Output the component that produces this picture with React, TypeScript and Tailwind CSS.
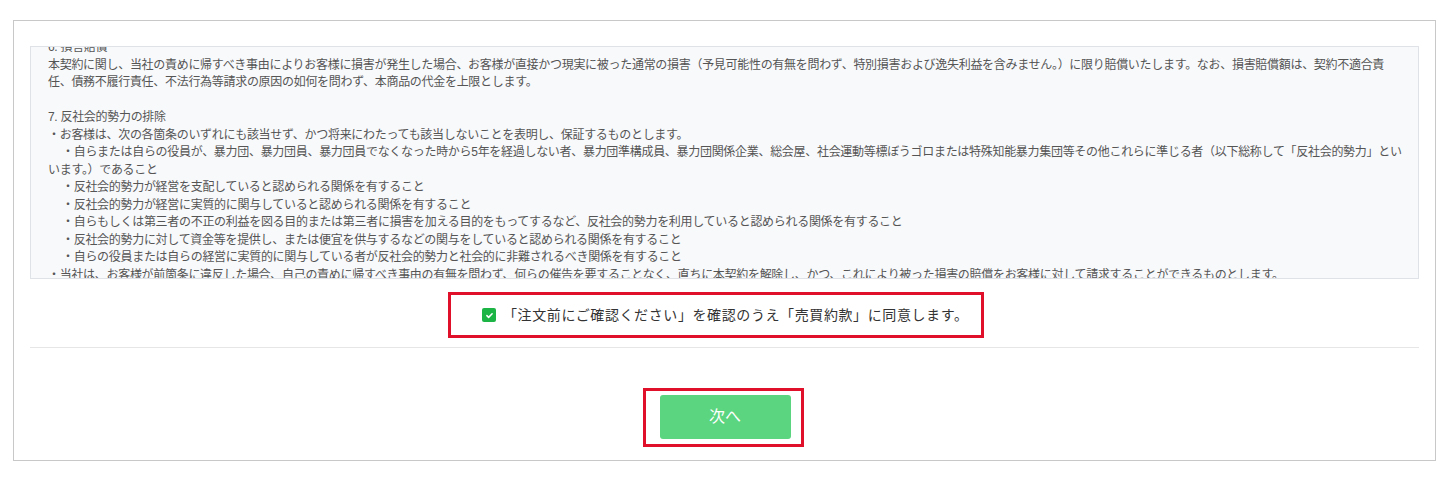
import { useState } from 'react';

const SUB_ITEMS = [
  '反社会的勢力が経営を支配していると認められる関係を有すること',
  '反社会的勢力が経営に実質的に関与していると認められる関係を有すること',
  '自らもしくは第三者の不正の利益を図る目的または第三者に損害を加える目的をもってするなど、反社会的勢力を利用していると認められる関係を有すること',
  '反社会的勢力に対して資金等を提供し、または便宜を供与するなどの関与をしていると認められる関係を有すること',
  '自らの役員または自らの経営に実質的に関与している者が反社会的勢力と社会的に非難されるべき関係を有すること',
];

function SubItem({ children }: { children: React.ReactNode }) {
  return (
    <div className="whitespace-nowrap">
      <span className="inline-block w-[14px]" />・{children}
    </div>
  );
}

export default function App() {
  const [agreed, setAgreed] = useState(true);

  return (
    <div className="min-h-screen bg-white pt-[20px] font-['Liberation_Sans','Noto_Sans_CJK_JP',sans-serif]">
      <div className="ml-[13px] w-[1423px] border border-[#c8c8c8] px-4 pt-[25px] pb-[13px]">
        {/* 売買約款 */}
        <div className="h-[233px] overflow-hidden border border-[#dfe2e7] bg-[#f8f9fb] px-[17px]">
          <div className="-mt-[8px] text-[12px] leading-[17.5px] tracking-[-0.3px] text-[#555]">
            <div>6. 損害賠償</div>
            <div className="whitespace-nowrap">
              本契約に関し、当社の責めに帰すべき事由によりお客様に損害が発生した場合、お客様が直接かつ現実に被った通常の損害（予見可能性の有無を問わず、特別損害および逸失利益を含みません。）に限り賠償いたします。なお、損害賠償額は、契約不適合責
            </div>
            <div className="whitespace-nowrap">
              任、債務不履行責任、不法行為等請求の原因の如何を問わず、本商品の代金を上限とします。
            </div>
            <div className="h-[17.5px]" />
            <div>7. 反社会的勢力の排除</div>
            <div className="whitespace-nowrap">
              ・お客様は、次の各箇条のいずれにも該当せず、かつ将来にわたっても該当しないことを表明し、保証するものとします。
            </div>
            <SubItem>
              自らまたは自らの役員が、暴力団、暴力団員、暴力団員でなくなった時から5年を経過しない者、暴力団準構成員、暴力団関係企業、総会屋、社会運動等標ぼうゴロまたは特殊知能暴力集団等その他これらに準じる者（以下総称して「反社会的勢力」とい
            </SubItem>
            <div className="whitespace-nowrap">います。）であること</div>
            {SUB_ITEMS.map((item) => (
              <SubItem key={item}>{item}</SubItem>
            ))}
            <div className="whitespace-nowrap">
              ・当社は、お客様が前箇条に違反した場合、自己の責めに帰すべき事由の有無を問わず、何らの催告を要することなく、直ちに本契約を解除し、かつ、これにより被った損害の賠償をお客様に対して請求することができるものとします。
            </div>
          </div>
        </div>

        {/* 同意チェック */}
        <div className="mt-[13px] flex justify-center">
          <label className="mr-[17px] flex w-[536px] cursor-pointer items-center border-[3px] border-[#e0102b] py-[10px] pl-[31px] pr-[10px]">
            <button
              type="button"
              onClick={() => setAgreed(!agreed)}
              className={`flex h-[14px] w-[14px] shrink-0 items-center justify-center rounded-[2px] ${
                agreed ? 'bg-[#1db446]' : 'border border-[#bbb] bg-white'
              }`}
            >
              {agreed && (
                <svg className="h-[9px] w-[9px]" viewBox="0 0 12 12" fill="none">
                  <path d="M2.5 6.2l2.3 2.3 4.7-4.9" stroke="white" strokeWidth={2} strokeLinecap="round" strokeLinejoin="round" />
                </svg>
              )}
            </button>
            <span className="ml-[7px] whitespace-nowrap text-[14px] leading-[20px] tracking-[0.6px] text-[#333]">
              「注文前にご確認ください」を確認のうえ「売買約款」に同意します。
            </span>
          </label>
        </div>

        <div className="mt-[9px] border-t border-[#e6e6e6]" />

        {/* 次へ */}
        <div className="mt-[40px] flex justify-center">
          <div className="mr-[3px] border-[3px] border-[#e0102b] pt-[4px] pb-[5px] pl-[14px] pr-[10px]">
            <button
              type="button"
              className="h-[44px] w-[131px] rounded-[3px] bg-[#5bd57f] text-[16px] text-white"
            >
              次へ
            </button>
          </div>
        </div>
      </div>
    </div>
  );
}
